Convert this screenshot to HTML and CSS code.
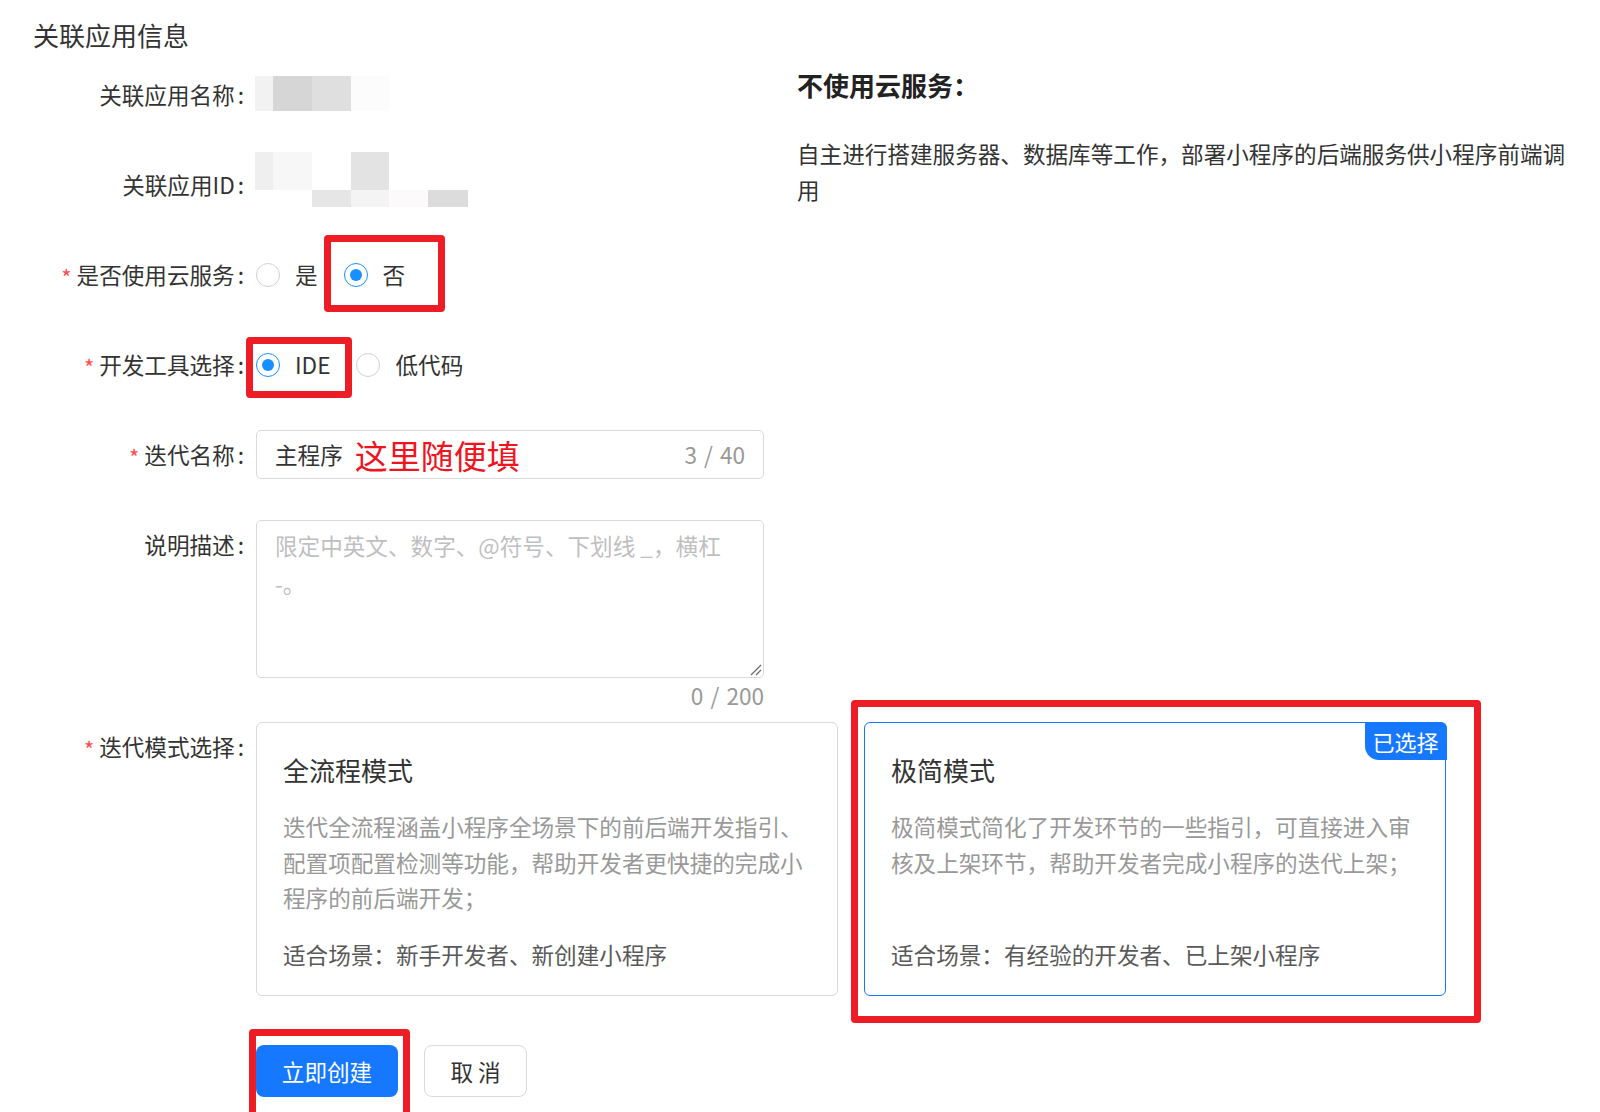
FILE: index.html
```html
<!DOCTYPE html>
<html lang="zh-CN">
<head>
<meta charset="utf-8">
<title>关联应用信息</title>
<link rel="stylesheet" href="styles.css">
</head>
<body>
<div class="page">
  <h2 class="section-title">关联应用信息</h2>
  <div class="top">
    <div class="form-col">
      <div class="form-row row-1">
        <div class="label">关联应用名称</div>
        <div class="control">
          <div class="mosaic">
            <span class="m w18 c-f3"></span><span class="m w39 c-d4"></span><span class="m w39 c-de"></span><span class="m w38 c-fc"></span>
          </div>
        </div>
      </div>
      <div class="form-row row-2">
        <div class="label">关联应用ID</div>
        <div class="control control-top">
          <div class="mosaic mosaic-id">
            <div class="mrow tall">
              <span class="m w18 c-ef"></span><span class="m w39 c-f7"></span><span class="m w39 c-ff"></span><span class="m w38 c-e3"></span>
            </div>
            <div class="mrow short">
              <span class="m w18 c-ff"></span><span class="m w39 c-ff"></span><span class="m w39 c-e6"></span><span class="m w38 c-f4"></span><span class="m w39 c-fa"></span><span class="m w40 c-dc"></span>
            </div>
          </div>
        </div>
      </div>
      <div class="form-row">
        <div class="label required">是否使用云服务</div>
        <div class="control">
          <div class="radio-group">
            <label class="radio"><span class="radio-circle"></span><span class="radio-text">是</span></label>
            <label class="radio checked"><span class="radio-circle"></span><span class="radio-text">否</span></label>
          </div>
        </div>
      </div>
      <div class="form-row">
        <div class="label required">开发工具选择</div>
        <div class="control">
          <div class="radio-group">
            <label class="radio checked"><span class="radio-circle"></span><span class="radio-text">IDE</span></label>
            <label class="radio"><span class="radio-circle"></span><span class="radio-text">低代码</span></label>
          </div>
        </div>
      </div>
      <div class="form-row">
        <div class="label required">迭代名称</div>
        <div class="control">
          <div class="input">
            <span class="input-value">主程序</span>
            <span class="note">这里随便填</span>
            <span class="count">3 / 40</span>
          </div>
        </div>
      </div>
      <div class="form-row row-desc">
        <div class="label">说明描述</div>
        <div class="control control-col">
          <div class="textarea">
            <div class="placeholder">限定中英文、数字、@符号、下划线 _，横杠<br>-。</div>
            <svg class="resize" width="14" height="14" viewBox="0 0 14 14"><path d="M13 3 L3 13 M13 8 L8 13" stroke="#6b6b6b" stroke-width="1.3" fill="none"/></svg>
          </div>
          <div class="ta-count">0 / 200</div>
        </div>
      </div>
    </div>
    <div class="info">
      <div class="info-title">不使用云服务：</div>
      <p class="info-desc">自主进行搭建服务器、数据库等工作，部署小程序的后端服务供小程序前端调用</p>
    </div>
  </div>

  <div class="form-row row-mode">
    <div class="label required">迭代模式选择</div>
    <div class="control cards">
      <div class="card">
        <div class="card-title">全流程模式</div>
        <div class="card-desc">迭代全流程涵盖小程序全场景下的前后端开发指引、配置项配置检测等功能，帮助开发者更快捷的完成小程序的前后端开发；</div>
        <div class="card-scene">适合场景：新手开发者、新创建小程序</div>
      </div>
      <div class="card selected">
        <span class="badge">已选择</span>
        <div class="card-title">极简模式</div>
        <div class="card-desc">极简模式简化了开发环节的一些指引，可直接进入审核及上架环节，帮助开发者完成小程序的迭代上架；</div>
        <div class="card-scene">适合场景：有经验的开发者、已上架小程序</div>
      </div>
    </div>
  </div>

  <div class="form-row row-actions">
    <div class="label empty"></div>
    <div class="control actions">
      <button class="btn btn-primary">立即创建</button>
      <button class="btn btn-default">取 消</button>
    </div>
  </div>

  <div class="mark mark-no"></div>
  <div class="mark mark-ide"></div>
  <div class="mark mark-card"></div>
  <div class="mark mark-btn"></div>
</div>
</body>
</html>
```

FILE: styles.css
```css
* { box-sizing: border-box; }

html, body {
  margin: 0;
  padding: 0;
  background: #fff;
}

body {
  font-family: "Noto Sans CJK SC", "Microsoft YaHei", "Noto Sans", sans-serif;
  color: #333;
  font-size: 22.6px;
  width: 1600px;
  height: 1112px;
  overflow: hidden;
}

.page {
  position: relative;
  padding-top: 17px;
  height: 1112px;
}

.section-title {
  margin: 0;
  padding-left: 33px;
  font-size: 26px;
  font-weight: 400;
  line-height: 36px;
  color: #333;
}

.top {
  display: flex;
  align-items: flex-start;
}

.form-col {
  width: 764px;
  padding-top: 17px;
}

.form-row {
  display: flex;
  align-items: flex-start;
  margin-bottom: 41px;
}

.label {
  width: 256px;
  flex: none;
  text-align: right;
  line-height: 49px;
  height: 49px;
  font-size: 22.6px;
  color: #333;
  white-space: nowrap;
}

.label::after {
  content: ":";
  margin: 0 12px 0 3px;
}

.label.empty::after { content: ""; }

.label.required::before {
  content: "*";
  color: #ff4d4f;
  margin-right: 5px;
  font-size: 22px;
  position: relative;
  top: 2px;
}

.control {
  flex: none;
  width: 508px;
  min-height: 49px;
  display: flex;
  align-items: center;
}

.control-top { align-items: flex-start; }

/* mosaic redaction */
.mosaic { display: flex; height: 35px; margin-left: -1px; margin-top: -2px; }
.mosaic .m { display: block; height: 100%; }
.mosaic-id {
  flex-direction: column;
  height: auto;
  margin-top: -8px;
}
.mrow { display: flex; }
.mrow.tall { height: 38px; }
.mrow.short { height: 17px; }
.mrow .m { height: 100%; }
.w18 { width: 18px; }
.w38 { width: 38px; }
.w39 { width: 39px; }
.w40 { width: 40px; }
.c-f3 { background: #f2f2f2; }
.c-d4 { background: #d6d6d6; }
.c-de { background: #dfdfdf; }
.c-fc { background: #fcfcfc; }
.c-ef { background: #efefef; }
.c-f7 { background: #f7f7f7; }
.c-ff { background: #ffffff; }
.c-e3 { background: #e3e3e3; }
.c-e6 { background: #e6e6e6; }
.c-f4 { background: #f4f4f4; }
.c-fa { background: #fcfafa; }
.c-dc { background: #dcdcdc; }

/* radios */
.radio-group { display: flex; align-items: center; }
.radio {
  display: inline-flex;
  align-items: center;
  margin-right: 26px;
  line-height: 49px;
}
.radio-circle {
  width: 24px;
  height: 24px;
  border: 1.5px solid #d0d0d0;
  border-radius: 50%;
  position: relative;
  flex: none;
}
.radio.checked .radio-circle { border-color: #1890ff; }
.radio.checked .radio-circle::after {
  content: "";
  position: absolute;
  left: 50%;
  top: 50%;
  width: 12px;
  height: 12px;
  margin: -6px 0 0 -6px;
  border-radius: 50%;
  background: #1890ff;
}
.radio-text { margin-left: 15px; color: #333; }

/* input */
.input {
  width: 508px;
  height: 49px;
  border: 1.5px solid #d9d9d9;
  border-radius: 5px;
  display: flex;
  align-items: center;
  padding: 0 18px 0 18px;
}
.input-value { color: #333; }
.note {
  color: #f0141e;
  font-size: 33px;
  margin-left: 12px;
  line-height: 40px;
}
.count {
  margin-left: auto;
  color: #999;
  word-spacing: 2px;
}

/* textarea */
.control-col {
  flex-direction: column;
  align-items: stretch;
}
.textarea {
  position: relative;
  height: 158px;
  border: 1.5px solid #d9d9d9;
  border-radius: 5px;
  padding: 6px 18px;
}
.placeholder {
  color: #bfbfbf;
  line-height: 38px;
}
.resize {
  position: absolute;
  right: 1px;
  bottom: 1px;
}
.ta-count {
  text-align: right;
  color: #999;
  line-height: 36px;
  height: 36px;
  word-spacing: 2px;
}
.row-desc { margin-bottom: 8px; }

/* info panel */
.info {
  margin-left: 33px;
  width: 790px;
  padding-top: 14px;
}
.info-title {
  font-size: 26px;
  font-weight: 700;
  line-height: 36px;
  color: #222;
}
.info-desc {
  margin: 33px 0 0;
  line-height: 36px;
  color: #333;
}

/* cards */
.row-mode { margin-bottom: 49px; }
.cards {
  width: auto;
  display: grid;
  grid-template-columns: 582px 582px;
  column-gap: 26px;
  align-items: stretch;
}
.card {
  position: relative;
  height: 274px;
  border: 1.5px solid #d9d9d9;
  border-radius: 6px;
  padding: 28px 20px 22px 26px;
  display: flex;
  flex-direction: column;
}
.card.selected { border-color: #1677ff; }
.card-title {
  font-size: 26px;
  line-height: 38px;
  color: #333;
}
.card-desc {
  margin-top: 20px;
  line-height: 35.5px;
  color: #999;
}
.card-scene {
  margin-top: auto;
  line-height: 36px;
  color: #595959;
}
.badge {
  position: absolute;
  top: -1.5px;
  right: -1.5px;
  width: 82px;
  height: 38px;
  background: #1677ff;
  color: #fff;
  font-size: 22px;
  line-height: 38px;
  text-align: center;
  border-radius: 0 6px 0 14px;
}

/* buttons */
.actions { align-items: center; }
.btn {
  font-family: inherit;
  font-size: 22.6px;
  height: 52px;
  border-radius: 8px;
  cursor: pointer;
  padding: 0;
}
.btn-primary {
  width: 142px;
  background: #1677ff;
  border: none;
  color: #fff;
}
.btn-default {
  width: 103px;
  margin-left: 26px;
  background: #fff;
  border: 1.5px solid #d9d9d9;
  color: #333;
}

/* red annotation marks */
.mark {
  position: absolute;
  border: 7px solid #ee1c25;
  border-radius: 4px;
  pointer-events: none;
}
.mark-no { left: 324px; top: 235px; width: 121px; height: 77px; }
.mark-ide { left: 246px; top: 337px; width: 106px; height: 61px; }
.mark-card { left: 851px; top: 700px; width: 630px; height: 323px; }
.mark-btn { left: 249px; top: 1029px; width: 161px; height: 100px; }
```
